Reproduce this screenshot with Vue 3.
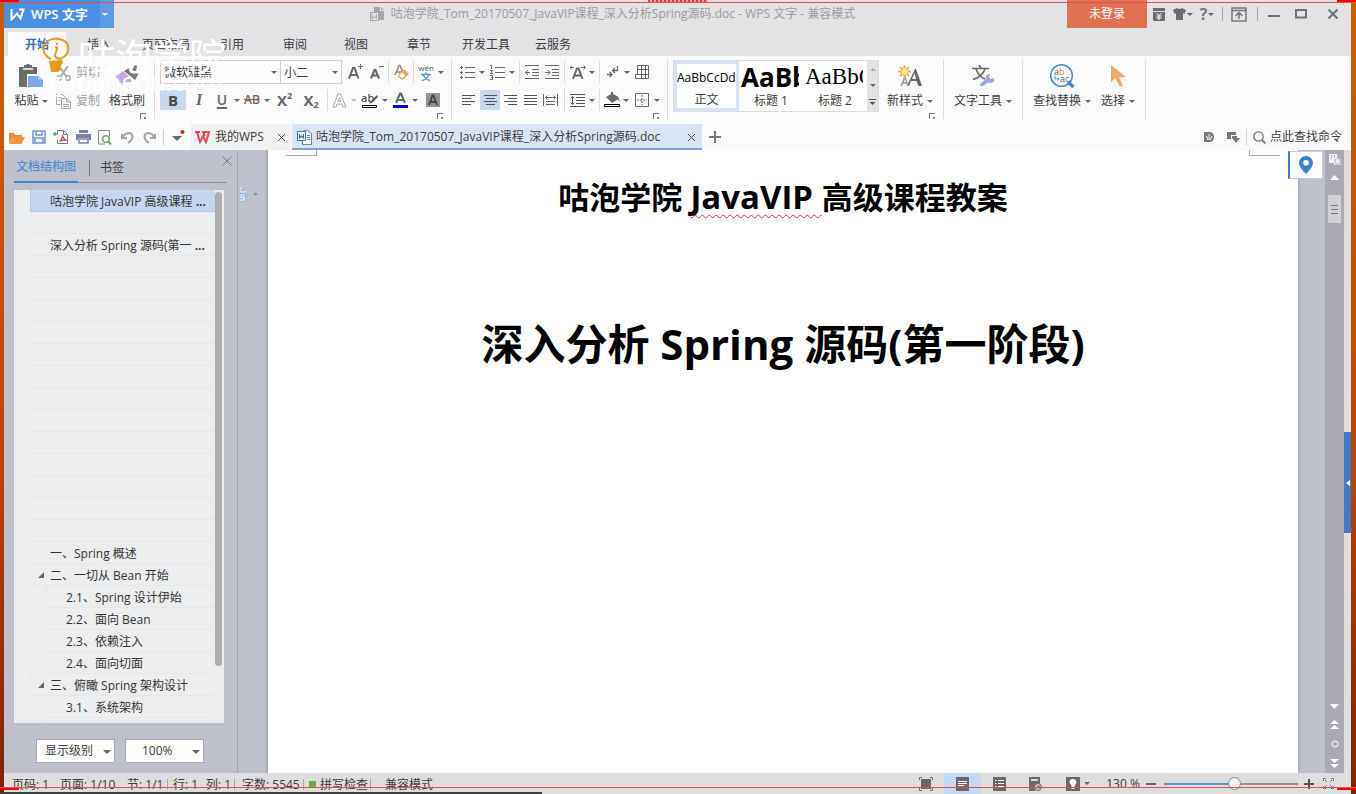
<script setup>
import { ref } from 'vue'

const menus = ['开始', '插入', '页面布局', '引用', '审阅', '视图', '章节', '开发工具', '云服务']
const docName = '咕泡学院_Tom_20170507_JavaVIP课程_深入分析Spring源码.doc'
const blanks = (n) => Array.from({ length: n }, () => ({ text: '', level: 1 }))
const outline = [
  { text: '咕泡学院 JavaVIP 高级课程', level: 1, cut: true, active: true },
  ...blanks(1),
  { text: '深入分析 Spring 源码(第一', level: 1, cut: true },
  ...blanks(13),
  { text: '一、Spring 概述', level: 1 },
  { text: '二、一切从 Bean 开始', level: 1, open: true },
  { text: '2.1、Spring 设计伊始', level: 2 },
  { text: '2.2、面向 Bean', level: 2 },
  { text: '2.3、依赖注入', level: 2 },
  { text: '2.4、面向切面', level: 2 },
  { text: '三、俯瞰 Spring 架构设计', level: 1, open: true },
  { text: '3.1、系统架构', level: 2 },
  { text: '', level: 2 }
]
const zoom = ref(53)
</script>

<template>
  <div class="desktop">
    <div class="window">
      <header class="titlebar">
        <button class="brand">
          <svg width="15" height="13" viewBox="0 0 15 13"><path d="M1.500 1v10.500L7 5.500l3.500 5L13.500 1.500H9" fill="none" stroke="#fff" stroke-width="2" /></svg>
          <span>WPS 文字</span>
          <i class="caret white"></i>
        </button>
        <div class="doc-title">
          <svg width="15" height="15" viewBox="0 0 15 15"><path d="M4 0h6v4h4v9H8V6H4z" fill="#a5a5a8" /><path d="M11 0l3 3h-3z" fill="#a5a5a8" /><rect x="0.500" y="5.500" width="8" height="8" fill="#e3e3e5" stroke="#a5a5a8" /><path d="M2 7.500v4l2.500-2 2 2v-4" fill="none" stroke="#a5a5a8" /></svg>
          <span>{{ docName }} - WPS 文字 - 兼容模式</span>
        </div>
        <button class="login">未登录</button>
        <div class="win-tools">
          <button aria-label="商城"><svg width="12" height="13" viewBox="0 0 12 13"><path d="M0 0h12v3H0zM0 4h12v8q0 1-1 1H1q-1 0-1-1z" fill="#6b6b6e" /><path d="M3.500 5L6 7.500 8.500 5M3.500 8h5M3.500 10h5M6 7.500V12" fill="none" stroke="#fff" /></svg></button>
          <button aria-label="皮肤"><svg width="13" height="12" viewBox="0 0 13 12"><path d="M4 0q2.500 2 5 0l4 2-1.500 4L10 5v7H3V5L1.500 6 0 2z" fill="#6b6b6e" /></svg><i class="caret"></i></button>
          <button class="help" aria-label="帮助">?<i class="caret"></i></button>
          <i class="tsep"></i>
          <button aria-label="隐藏功能区"><svg width="16" height="15" viewBox="0 0 16 15"><path d="M1 1h14v13H1zM1 3.500h14M8 12V6M4.500 9L8 5.500 11.500 9" fill="none" stroke="#77777a" stroke-width="1.500" /></svg></button>
          <i class="tsep"></i>
          <button aria-label="最小化"><svg width="12" height="12" viewBox="0 0 12 12"><path d="M0 8h12" stroke="#707073" stroke-width="2" /></svg></button>
          <button aria-label="最大化"><svg width="12" height="12" viewBox="0 0 12 12"><path d="M1 2h10v7.500H1z" fill="none" stroke="#707073" stroke-width="2" /></svg></button>
          <button aria-label="关闭"><svg width="12" height="12" viewBox="0 0 12 12"><path d="M1.500 1.500l9 9m0-9l-9 9" stroke="#707073" stroke-width="2" /></svg></button>
        </div>
      </header>

      <nav class="menus">
        <button v-for="(m, i) in menus" :key="m" :class="{ on: i === 0 }">{{ m }}</button>
      </nav>

      <section class="ribbon">
        <div class="group clip">
          <button class="big">
            <span class="pic"><svg width="24" height="24" viewBox="0 0 24 24"><path d="M0 3h5V1h2l1-1h2l1 1h2v2h5v7H8v13H1q-1 0-1-1z" fill="#6b6b6b" /><path d="M4 5h10" stroke="#fbfbfb" stroke-width="1.500" /><path d="M9 12h10l5 4v6q0 1-1 1H9z" fill="#7ba7e6" /><path d="M19 11v5h5z" fill="#a9c6f0" /></svg></span>
            <span class="cap">粘贴<i class="caret"></i></span>
          </button>
          <div class="duo">
            <button><svg width="15" height="15" viewBox="0 0 15 15"><path d="M3 0l7 10M12 0L5 10" stroke="#aaa" stroke-width="2" fill="none" /><circle cx="3" cy="12" r="2.200" fill="none" stroke="#aaa" stroke-width="1.500" /><circle cx="12" cy="12" r="2.200" fill="none" stroke="#aaa" stroke-width="1.500" /></svg>剪切</button>
            <button><svg width="15" height="15" viewBox="0 0 15 15"><path d="M4.500 10.500H.5V.5h6l3 3M5.500 4.500h5l4 3.500v6.500h-9zM10.500 4.500V8h4M7 10.500h6M7 12.500h6M2.500 3.500H5M2.500 6.500H4" fill="none" stroke="#aaa" /></svg>复制</button>
          </div>
          <button class="big">
            <span class="pic"><svg width="24" height="22" viewBox="0 0 24 22"><path d="M9 6l5-3 3 2 3-5 2 1-1 5 3 2-4 7z" fill="#777" /><path d="M0 12l8-6 10 9-5 4-3-1-1 4-3-4-3-1z" fill="#c9a4ee" /></svg></span>
            <span class="cap">格式刷</span>
          </button>
          <i class="launch"></i>
        </div>

        <div class="group font">
          <div class="row r1">
            <div class="combo">
              <label class="pick face"><select aria-label="字体"><option>微软雅黑</option></select><i class="caret"></i></label>
              <label class="pick size"><select aria-label="字号"><option>小二</option></select><i class="caret"></i></label>
            </div>
            <button aria-label="增大字号"><svg width="15" height="16" viewBox="0 0 15 16"><path d="M1 14.500L5 4h1.500l4 10.500M2.500 11h6.500" fill="none" stroke="#666" stroke-width="2" /><path d="M10 2.500h5M12.500 0v5" stroke="#666" /></svg></button>
            <button aria-label="减小字号"><svg width="15" height="16" viewBox="0 0 15 16"><path d="M1 14.500L4.500 6h1l3.500 8.500M2 11.500h6" fill="none" stroke="#666" stroke-width="2" /><path d="M9 2.500h5" stroke="#666" /></svg></button>
            <i class="vsep"></i>
            <button aria-label="清除格式"><svg width="15" height="16" viewBox="0 0 15 16"><path d="M1 11L5 1.500h1L9 9M2.500 8H8" fill="none" stroke="#888" stroke-width="1.500" /><path d="M5 10.500l5-4.500 4 4-5 4.500q-1 .5-2 0l-2-2q-.5-1 0-2z" fill="#fff" stroke="#eda660" stroke-width="1.500" /><path d="M8 8l2.500-2 3.500 4-2.500 2z" fill="#eda660" /></svg></button>
            <i class="vsep"></i>
            <button aria-label="拼音指南"><svg class="roomy" width="16" height="20" viewBox="0 0 16 20"><text x="8" y="9" font-size="8" text-anchor="middle" fill="#555">wén</text><path d="M3 12.500h10M8 10.500v2M5 12.500q2 5 7 6M11 12.500q-2 5-7 6" fill="none" stroke="#6391d6" stroke-width="1.300" /></svg></button>
            <i class="caret"></i>
          </div>
          <div class="row r2">
            <button class="hot bold">B</button>
            <button class="ital">I</button>
            <button class="und">U</button><i class="caret"></i>
            <button class="strike">AB</button><i class="caret"></i>
            <button class="xx">X<sup>2</sup></button>
            <button class="xx">X<sub>2</sub></button>
            <i class="vsep"></i>
            <button aria-label="文字效果"><svg width="15" height="15" viewBox="0 0 15 15"><path d="M1 14L6 1h2.500L14 14h-3l-1-3H5l-1 3zM6 8.500h3L7.500 4z" fill="#fff" stroke="#aaa" /></svg></button><i class="caret pale"></i>
            <button aria-label="突出显示"><svg class="roomy" width="18" height="18" viewBox="0 0 18 18"><text x="0" y="11" font-size="11" font-weight="600" fill="#555">ab</text><path d="M16 4l-6 6-2 3 3.500-1.500L17 6z" fill="#555" /><path d="M1.500 14.500h14v2h-14z" fill="#fff" stroke="#000" /></svg></button><i class="caret"></i>
            <button aria-label="字体颜色"><svg width="15" height="17" viewBox="0 0 15 17"><path d="M3 11L7 1.500h1L12 11M4.500 8h6" fill="none" stroke="#666" stroke-width="2" /><path d="M0 13h15v3H0z" fill="#0000d8" /></svg></button><i class="caret"></i>
            <button aria-label="字符底纹"><svg width="14" height="14" viewBox="0 0 14 14"><path d="M0 0h14v14H0z" fill="#929299" /><path d="M3 12L6.500 2.500h1L11 12M4 9h6" fill="none" stroke="#444" stroke-width="1.800" /></svg></button>
          </div>
          <i class="launch"></i>
        </div>

        <div class="group para">
          <div class="row r1">
            <button aria-label="项目符号"><svg width="15" height="15" viewBox="0 0 15 15"><path d="M5 2.500h10M5 7.500h10M5 12.500h10" stroke="#666" /><path d="M0 2.500h3M1.500 1v3M0 7.500h3M1.500 6v3M0 12.500h3M1.500 11v3" stroke="#666" /></svg></button><i class="caret"></i>
            <button aria-label="编号"><svg width="15" height="17" viewBox="0 0 15 17"><path d="M5 3.500h10M5 8.500h10M5 13.500h10" stroke="#666" /><path d="M0 1.500h1.500V5M0 6.500h2.500L.5 9.500H3M0 11.500h2.500v4H0M1 13.500h1.500" fill="none" stroke="#666" /></svg></button><i class="caret"></i>
            <i class="vsep"></i>
            <button aria-label="减少缩进"><svg width="14" height="14" viewBox="0 0 14 14"><path d="M0 .5h14M7 4.500h7M7 7.500h7M7 10.500h7M0 13.500h14M0 7.500h5M3 5L.5 7.500 3 10" fill="none" stroke="#666" /></svg></button>
            <button aria-label="增加缩进"><svg width="14" height="14" viewBox="0 0 14 14"><path d="M0 .5h14M7 4.500h7M7 7.500h7M7 10.500h7M0 13.500h14M0 7.500h5M2.500 5L5 7.500 2.500 10" fill="none" stroke="#666" /></svg></button>
            <i class="vsep"></i>
            <button aria-label="字符缩放"><svg width="16" height="15" viewBox="0 0 16 15"><path d="M3 14L7 3.500h1.500L12.500 14M5 10.500h6" fill="none" stroke="#666" stroke-width="2" /><path d="M0 2.500h4M2 .5L0 2.500l2 2M11 2.500h4.500M13.500.5l2 2-2 2" fill="none" stroke="#666" /></svg></button><i class="caret"></i>
            <i class="vsep"></i>
            <button aria-label="显示段落标记"><svg width="12" height="14" viewBox="0 0 12 14"><path d="M10.500 1v4.500H6M8 3L5.500 5.500 8 8M0 9.500h5M2.500 7L5 9.500 2.500 12" fill="none" stroke="#666" stroke-width="1.300" /></svg></button><i class="caret"></i>
            <button aria-label="插入表格"><svg width="14" height="14" viewBox="0 0 14 14"><path d="M2.500.5h11v13H.5v-4M2.500.5v9M.5 9.500h13M2.500 4.500h11M6.500 1v12M10.500 1v12" fill="none" stroke="#666" /></svg></button>
          </div>
          <div class="row r2">
            <button aria-label="左对齐"><svg width="13" height="11" viewBox="0 0 13 11"><path d="M0 .5h13M0 3.500h9M0 6.500h13M0 9.500h9" stroke="#555" /></svg></button>
            <button class="hot" aria-label="居中"><svg width="13" height="11" viewBox="0 0 13 11"><path d="M0 .5h13M2 3.500h9M0 6.500h13M2 9.500h9" stroke="#555" /></svg></button>
            <button aria-label="右对齐"><svg width="13" height="11" viewBox="0 0 13 11"><path d="M0 .5h13M4 3.500h9M0 6.500h13M4 9.500h9" stroke="#555" /></svg></button>
            <button aria-label="两端对齐"><svg width="13" height="11" viewBox="0 0 13 11"><path d="M0 .5h13M0 3.500h13M0 6.500h13M0 9.500h13" stroke="#555" /></svg></button>
            <button aria-label="分散对齐"><svg width="15" height="12" viewBox="0 0 15 12"><path d="M.5 0v12M14.500 0v12M2.500 3.500h10M4.500 1.500l-2 2 2 2M10.500 1.500l2 2-2 2M3 7.500h9M3 10.500h9" fill="none" stroke="#666" /></svg></button>
            <i class="vsep"></i>
            <button aria-label="行距"><svg width="15" height="13" viewBox="0 0 15 13"><path d="M0 .5h15M6 3.500h9M6 6.500h9M6 9.500h9M0 12.500h15M2.500 2.500v8M.5 4.500l2-2 2 2M.5 8.500l2 2 2-2" fill="none" stroke="#555" /></svg></button><i class="caret"></i>
            <i class="vsep"></i>
            <button aria-label="底纹颜色"><svg width="16" height="16" viewBox="0 0 16 16"><path d="M2 5l5-3V0h2v2l5 2.500 2 5-2.500-2L8 11z" fill="#6b6b6b" /><path d="M.5 12.500h15v2H.5z" fill="#fff" stroke="#000" /></svg></button><i class="caret"></i>
            <button aria-label="边框"><svg width="14" height="14" viewBox="0 0 14 14"><path d="M.5.5h13v13H.5z" fill="none" stroke="#666" /><path d="M7 2v10M2 7h10" stroke="#666" stroke-dasharray="2 1" /></svg></button><i class="caret"></i>
          </div>
          <i class="launch"></i>
        </div>

        <div class="group styles">
          <div class="gallery">
            <button class="style sel"><span class="sample">AaBbCcDd</span><span>正文</span></button>
            <button class="style"><span class="sample h1s">AaBb</span><span>标题 1</span></button>
            <button class="style"><span class="sample h2s">AaBbC</span><span>标题 2</span></button>
            <div class="spin">
              <i class="caret up"></i><i class="caret"></i>
              <svg width="7" height="7" viewBox="0 0 7 7"><path d="M0 .5h7" stroke="#555" /><path d="M.5 3h6l-3 3z" fill="#555" /></svg>
            </div>
          </div>
          <button class="big">
            <span class="pic"><svg width="25" height="22" viewBox="0 0 25 22"><path d="M9 21l8-17h1l6 17h-3.500l-2-5H13l-2 5z" fill="#666" /><path d="M14 14h4l-1.500-6z" fill="#fbfbfb" /><path d="M3 21l4-9 3 9M4 18h5" fill="none" stroke="#999" stroke-width="1.500" /><path d="M6.500 0v3M6.500 10v3M0 6.500h3M10 6.500h3M2 2l2 2M9 9l2 2M2 11l2-2M9 4l2-2" stroke="#f4b350" stroke-width="2" /><circle cx="6.500" cy="6.500" r="3.500" fill="#ffe9a5" stroke="#f4b350" /></svg></span>
            <span class="cap">新样式<i class="caret"></i></span>
          </button>
          <i class="launch"></i>
        </div>

        <div class="group tools">
          <button class="big">
            <span class="pic"><svg width="23" height="22" viewBox="0 0 23 22"><path d="M0 3.500h17M7 0l2 3M4 4q3 8 9 10M13 4Q10 12 1 14.500" fill="none" stroke="#666" stroke-width="1.600" /><path d="M8 19l6-5q-1-4 3-5h1l-1 3 2 2 3-1q1 5-4 5l-2-.5L11 21q-3 1-3-2z" fill="#98a8da" /></svg></span>
            <span class="cap">文字工具<i class="caret"></i></span>
          </button>
        </div>

        <div class="group find">
          <button class="big">
            <span class="pic"><svg width="25" height="24" viewBox="0 0 25 24"><circle cx="11.500" cy="11.500" r="10.800" fill="#fff" stroke="#4a86d2" stroke-width="1.500" /><path d="M18 18l5.500 5" stroke="#4a86d2" stroke-width="3.500" /><text x="4" y="11" font-size="9" fill="#555">a<tspan fill="#d08030">b</tspan></text><path d="M5 12v3h4M7.500 13.500L9 15l-1.500 1.500" fill="none" stroke="#4a86d2" /><text x="10" y="18" font-size="9" fill="#555">a<tspan fill="#4a86d2">c</tspan></text></svg></span>
            <span class="cap">查找替换<i class="caret"></i></span>
          </button>
          <button class="big">
            <span class="pic"><svg width="15" height="22" viewBox="0 0 15 22"><path d="M0 0v17l4.500-4 4.500 9 3-1.500L8 12.500l7-.5z" fill="#f0a868" /></svg></span>
            <span class="cap">选择<i class="caret"></i></span>
          </button>
        </div>
      </section>

      <section class="quick">
        <div class="acts">
          <button aria-label="打开"><svg width="16" height="13" viewBox="0 0 16 13"><path d="M0 12V2h5l1 2h7v2H4z" fill="#e58a3c" /><path d="M4 6h12l-3.500 7H0z" fill="#ee9440" /></svg></button>
          <button aria-label="保存"><svg width="14" height="14" viewBox="0 0 14 14"><path d="M1 1h12v12H1zM4 1v4h6V1M1 8h12M3 8v5M11 8v5" fill="none" stroke="#6d9ad8" stroke-width="1.500" /></svg></button>
          <button aria-label="输出为PDF"><svg width="16" height="16" viewBox="0 0 16 16"><path d="M4.500 5.500v-4h6l4 4v9h-10v-4M10.500 1.500v4h4" fill="none" stroke="#777" /><path d="M0 5h4M2 3v4" stroke="#59a559" stroke-width="1.500" /><path d="M6.500 12.500q3-2 3-6.500.5 4 4 5.500-4-1-7 1z" fill="none" stroke="#d94545" stroke-width="1.300" /></svg></button>
          <button aria-label="打印"><svg width="15" height="14" viewBox="0 0 15 14"><path d="M3 0h9v3H3zM0 4h15v6h-2V8H2v2H0z" fill="#7d7daa" /><path d="M3 9h9v4H3z" fill="#fff" stroke="#7d7daa" stroke-width="1.500" /></svg></button>
          <button aria-label="打印预览"><svg width="14" height="15" viewBox="0 0 14 15"><path d="M7 14H.5V.5h11V6" fill="none" stroke="#888" /><circle cx="8" cy="9" r="3.300" fill="none" stroke="#67a567" stroke-width="1.500" /><path d="M10 11.500l3 3" stroke="#67a567" stroke-width="2" /></svg></button>
          <button aria-label="撤销"><svg width="13" height="13" viewBox="0 0 13 13"><path d="M1 3v4h5M2 6q2-4 6-4 3.500.5 3.500 3.500Q11.500 9 7 12" fill="none" stroke="#a3a3a6" stroke-width="2" /></svg></button>
          <button aria-label="重做"><svg width="13" height="13" viewBox="0 0 13 13"><path d="M12 3v4H7M11 6Q9 2 5 2 1.500 2.500 1.500 5.500 1.500 9 6 12" fill="none" stroke="#a3a3a6" stroke-width="2" /></svg></button>
        </div>
        <i class="qsep"></i>
        <button class="more" aria-label="更多"><svg width="14" height="14" viewBox="0 0 14 14"><path d="M0 6h10l-5 5z" fill="#666" /><circle cx="10.500" cy="2" r="2" fill="#f01818" /></svg></button>
        <div class="tab">
          <svg width="16" height="13" viewBox="0 0 16 13"><path d="M0 1h5M2 1l3 10 3-6 3 6 3-10H8l2 4" fill="none" stroke="#e5484d" stroke-width="2" /></svg>
          <span>我的WPS</span>
          <button aria-label="关闭标签"><svg width="9" height="9" viewBox="0 0 9 9"><path d="M1 1l7 7m0-7L1 8" stroke="#444" /></svg></button>
        </div>
        <div class="tab current">
          <svg width="15" height="15" viewBox="0 0 15 15"><path d="M6.500.5h4l4 3v11h-9V11M10 5.500h3M10 7.500h3M10 9.500h3" fill="#fff" stroke="#6b7f9f" /><path d="M.5 1.500h8v9h-8z" fill="#fff" stroke="#4471b5" /><path d="M2.500 4v4l2-2 2 2V4" fill="none" stroke="#4471b5" stroke-width="1.300" /></svg>
          <span>{{ docName }}</span>
          <button aria-label="关闭标签"><svg width="9" height="9" viewBox="0 0 9 9"><path d="M1 1l7 7m0-7L1 8" stroke="#444" /></svg></button>
        </div>
        <button class="plus" aria-label="新建标签"><svg width="12" height="12" viewBox="0 0 12 12"><path d="M0 6h12M6 0v12" stroke="#777" stroke-width="2" /></svg></button>
        <div class="find-cmd">
          <button aria-label="文档"><svg width="10" height="10" viewBox="0 0 10 10"><path d="M0 0h5q5 0 5 5t-5 5H0z" fill="#76787f" /><path d="M2.500 4l1.500 4M5 2v6M8 4L6 8" stroke="#fff" fill="none" /></svg></button>
          <button aria-label="窗口"><svg width="13" height="11" viewBox="0 0 13 11"><path d="M0 0h9v3H4v4H0z" fill="#76787f" /><path d="M5 4h5v2h3l-4 5-4-5z" fill="#76787f" /></svg></button>
          <i class="qsep"></i>
          <button class="cmd"><svg width="13" height="13" viewBox="0 0 13 13"><circle cx="5.500" cy="5.500" r="4.700" fill="none" stroke="#777" stroke-width="1.300" /><path d="M9 9l3.500 3.500" stroke="#777" stroke-width="1.800" /></svg>点此查找命令</button>
        </div>
      </section>

      <main class="work">
        <aside class="side">
          <div class="side-tabs">
            <button class="on">文档结构图</button>
            <i></i>
            <button>书签</button>
            <button class="shut" aria-label="关闭窗格"><svg width="10" height="10" viewBox="0 0 10 10"><path d="M.5.5l9 9m0-9l-9 9" stroke="#77797f" /></svg></button>
          </div>
          <div class="tree">
            <ul>
              <li v-for="(n, i) in outline" :key="i" :class="['l' + n.level, { active: n.active }]">
                <b v-if="n.open" class="fold"></b>{{ n.text }}<strong v-if="n.cut">&nbsp;...</strong>
              </li>
            </ul>
            <div class="thumb"></div>
          </div>
          <div class="side-foot">
            <label class="pick"><select aria-label="显示级别"><option>显示级别</option></select><i class="caret large"></i></label>
            <label class="pick pct"><select aria-label="比例"><option>100%</option></select><i class="caret large"></i></label>
          </div>
        </aside>
        <div class="gutter">
          <svg width="20" height="17" viewBox="0 0 20 17"><path d="M1 1l6 5v10H1z" fill="#92b0de" /><path d="M2 1v5h5M6 9H2v2.500h3.500V14H1" stroke="#e6edf8" fill="none" stroke-width="1.300" /><path d="M14 7h5l-2.500 3z" fill="#8a8d96" /></svg>
        </div>
        <article class="page">
          <div class="crop"><i></i><i></i></div>
          <h1>咕泡学院 <span class="typo">JavaVIP </span>高级课程教案</h1>
          <h2>深入分析 Spring 源码(第一阶段)</h2>
        </article>
        <div class="gutter right">
          <button class="pin" aria-label="定位"><svg width="14" height="18" viewBox="0 0 14 18"><path d="M7 18Q0 11 0 7a7 7 0 0 1 14 0q0 4-7 11z" fill="#3f7fd0" /><circle cx="7" cy="6.800" r="2.800" fill="#fff" /></svg></button>
        </div>
        <div class="scroll">
          <svg width="12" height="11" viewBox="0 0 12 11"><path d="M0 0h8v3l4 3v5H5V9H0z" fill="#f2f2f4" /><path d="M2.500 1v4M5.500 1v3M6 9V6l2.500-2L11 6.500V10H6" stroke="#a9aab4" fill="none" /></svg>
          <svg class="tri" width="9" height="5" viewBox="0 0 9 5"><path d="M0 5l4.500-5L9 5z" fill="#fff" /></svg>
          <div class="grip"><i></i><i></i><i></i></div>
          <div class="steps">
            <svg width="9" height="5" viewBox="0 0 9 5"><path d="M0 0l4.500 5L9 0z" fill="#fff" /></svg>
            <svg width="9" height="9" viewBox="0 0 9 9"><path d="M0 4l4.500-4L9 4zM0 9l4.500-4L9 9z" fill="#fff" /></svg>
            <svg width="8" height="8" viewBox="0 0 8 8"><circle cx="4" cy="4" r="3" fill="none" stroke="#fff" /></svg>
            <svg width="9" height="9" viewBox="0 0 9 9"><path d="M0 0l4.500 4L9 0zM0 5l4.500 4L9 5z" fill="#fff" /></svg>
          </div>
        </div>
        <div class="edge"><button aria-label="展开"><svg width="4" height="6" viewBox="0 0 4 6"><path d="M0 3l4-3v6z" fill="#fff" /></svg></button></div>
      </main>

      <footer class="status">
        <div class="info">
          <span>页码: 1</span><span>页面: 1/10</span><span>节: 1/1</span><i></i><span>行: 1</span><span>列: 1</span><i></i><span>字数: 5545</span><i></i>
          <span class="spell"><b></b>拼写检查</span><i></i><span>兼容模式</span>
        </div>
        <div class="views">
          <button aria-label="全屏"><svg width="14" height="14" viewBox="0 0 14 14"><path d="M2 2h10v10H2z" fill="#69696c" /><path d="M.5 3V.5H3M11 .5h2.500V3M.5 11v2.500H3M11 13.500h2.500V11" fill="none" stroke="#69696c" /></svg></button>
          <button class="on" aria-label="页面视图"><svg width="13" height="14" viewBox="0 0 13 14"><path d="M0 0h13v14H0z" fill="#69696c" /><path d="M2 4.500h9M2 6.500h9M2 8.500h6" stroke="#fff" /></svg></button>
          <button aria-label="大纲"><svg width="13" height="14" viewBox="0 0 13 14"><path d="M0 0h13v14H0z" fill="#69696c" /><path d="M2 3.500h1.500M5 3.500h6M2 6.500h1.500M5 6.500h6M2 9.500h1.500M5 9.500h6" stroke="#fff" /></svg></button>
          <button aria-label="网页"><svg width="13" height="14" viewBox="0 0 13 14"><path d="M0 0h11v7L6 14H0z" fill="#69696c" /><path d="M2 3h7" stroke="#fff" stroke-width="1.500" /><circle cx="9" cy="10" r="3.500" fill="#ccc" stroke="#69696c" /><path d="M7 11l4-2M9 8l1 4" stroke="#69696c" /></svg></button>
          <button class="eye" aria-label="护眼"><svg width="14" height="14" viewBox="0 0 14 14"><path d="M0 0h14v14H0z" fill="#69696c" /><path d="M7 2q3.500 0 3.500 3.500L8.500 9v3h-3V9l-2-3.500Q3.500 2 7 2z" fill="#fff" /></svg><i class="caret"></i></button>
          <span>130 %</span>
          <button aria-label="缩小"><svg width="10" height="10" viewBox="0 0 10 10"><path d="M0 5h10" stroke="#666" stroke-width="2" /></svg></button>
          <input v-model="zoom" type="range" min="0" max="100" aria-label="显示比例" />
          <button aria-label="放大"><svg width="10" height="10" viewBox="0 0 10 10"><path d="M0 5h10M5 0v10" stroke="#555" stroke-width="2" /></svg></button>
          <button aria-label="适应窗口"><svg width="11" height="11" viewBox="0 0 11 11"><path d="M.5 3V.5H3M8 .5h2.500V3M.5 8v2.500H3M8 10.500h2.500V8M2 2l2 2M9 2L7 4M2 9l2-2M9 9L7 7" fill="none" stroke="#777" /></svg></button>
        </div>
      </footer>
    </div>

    <div class="mark">
      <svg width="28" height="36" viewBox="0 0 28 36"><path d="M9 22Q1 18 1.500 11.500 3 2 14 1.500q12 1 12.500 10-.5 7-7.500 10-5 1-6-3l2-7q1-2-2-1" fill="none" stroke="#e69a1e" stroke-width="2" /><path d="M14 6h2v2h-2z" fill="#e69a1e" /><path d="M7 24l13-1 1 3-2 2v4l-3 3H9l-1-6z" fill="#e69a1e" /></svg>
      <b>咕泡学院</b>
      <em>gupaoedu.com</em>
    </div>
    <div class="rec top"></div>
    <div class="rec bottom"></div>
    <div class="shelf"></div>
  </div>
</template>

<style>
html,
body {
  margin: 0;
  background: #b84400;
}
</style>

<style scoped>
* {
  box-sizing: border-box;
}
.desktop {
  position: relative;
  height: 100vh;
  padding: 0 5px 0 4px;
  overflow: hidden;
  background: linear-gradient(#ca6000, #b84400 60%, #7c2200);
  font: 12px/18px "Open Sans", "Noto Sans CJK SC", sans-serif;
  color: #3c3c3c;
}
.window {
  height: 100%;
  display: flex;
  flex-direction: column;
  background: #e3e3e5;
}
button {
  display: flex;
  align-items: center;
  justify-content: center;
  flex: none;
  margin: 0;
  padding: 0;
  border: 0;
  background: none;
  font: inherit;
  color: inherit;
  white-space: nowrap;
}
svg {
  flex: none;
  display: block;
}
.roomy {
  overflow: visible;
}
i {
  font-style: normal;
}
.caret {
  flex: none;
  width: 0;
  height: 0;
  border: 3px solid transparent;
  border-top-color: #666;
  border-bottom: 0;
}
.caret.white {
  border-top-color: #fff;
}
.caret.pale {
  border-top-color: #bbb;
}
.caret.large {
  border-width: 4px 4px 0;
}
.caret.up {
  border-top: 0;
  border-bottom: 3px solid #aaa;
}

/* title bar */
.titlebar {
  flex: none;
  height: 28px;
  display: flex;
  align-items: center;
}
.brand {
  width: 110px;
  height: 28px;
  gap: 6px;
  background: linear-gradient(90deg, #4a90e2 96px, #5b9be4 96px);
  color: #fff;
  font-size: 13px;
  font-weight: 600;
}
.brand .caret {
  margin-left: 8px;
}
.doc-title {
  flex: 1;
  display: flex;
  align-items: center;
  justify-content: center;
  gap: 6px;
  padding-left: 44px;
  color: #9c9c9f;
  white-space: nowrap;
}
.login {
  width: 80px;
  height: 28px;
  background: #e07252;
  color: #fff;
}
.win-tools {
  display: grid;
  grid-template-columns: 24px 24px 24px 7px 26px 10px 24px 30px 33px;
  align-items: center;
  justify-items: center;
  width: 204px;
  height: 28px;
}
.win-tools button {
  gap: 1px;
}
.help {
  font-size: 16px;
  font-weight: 700;
  color: #77777a;
}
.tsep {
  width: 1px;
  height: 14px;
  background: #a5a5a8;
}

/* menu tabs */
.menus {
  flex: none;
  display: grid;
  grid-template-columns: 58px 66px 68px 64px 62px 60px 66px 68px 66px;
  height: 28px;
  padding: 4px 4px 0;
}
.menus button {
  padding-top: 2px;
}
.menus .on {
  background: #fbfbfb;
  color: #3a6fb5;
  font-weight: 600;
}

/* ribbon */
.ribbon {
  flex: none;
  display: flex;
  height: 68px;
  padding: 4px 0 5px;
  background: #fbfbfb;
}
.group {
  position: relative;
  flex: none;
  display: flex;
  border-right: 1px solid #dcdcde;
}
.clip {
  width: 151px;
  padding-left: 7px;
}
.font {
  width: 297px;
}
.para {
  width: 216px;
}
.font,
.para {
  flex-direction: column;
  gap: 4px;
  padding-left: 5px;
}
.styles {
  width: 276px;
  padding-left: 5px;
}
.tools {
  width: 79px;
  padding-left: 10px;
}
.find {
  width: 123px;
  gap: 10px;
  padding-left: 10px;
}
.launch {
  position: absolute;
  right: 8px;
  bottom: 0;
  width: 6px;
  height: 6px;
  border: solid #777;
  border-width: 1px 0 0 1px;
  background: linear-gradient(#888, #888) 3px 3px / 2px 2px no-repeat;
}
.big {
  flex-direction: column;
  justify-content: flex-start;
  align-self: flex-start;
}
.pic {
  display: flex;
  align-items: center;
  height: 32px;
}
.cap {
  display: flex;
  align-items: center;
  gap: 4px;
  height: 18px;
}
.clip .big {
  min-width: 40px;
}
.clip .cap {
  gap: 3px;
}
.duo {
  display: flex;
  flex-direction: column;
  gap: 4px;
  width: 46px;
  margin: 1px 6px 0 4px;
  color: #9f9f9f;
}
.duo button {
  height: 24px;
  gap: 5px;
}
.row {
  display: grid;
  align-items: center;
  justify-items: center;
  height: 24px;
}
.font .r1 {
  grid-template-columns: 182px 26px 18px 5px 20px 5px 20px 10px;
}
.font .r2 {
  grid-template-columns: 26px 26px 20px 9px 22px 8px 27px 26px 6px 19px 9px 23px 8px 22px 8px 28px;
}
.para .r1 {
  grid-template-columns: 21px 8px 22px 8px 6px 20px 20px 5px 21px 8px 7px 19px 9px 22px;
}
.para .r2 {
  grid-template-columns: 23px 20px 21px 19px 20px 8px 19px 9px 7px 18px 10px 22px 8px;
}
.vsep {
  width: 1px;
  height: 22px;
  background: #dcdcde;
}
.combo {
  display: flex;
  width: 100%;
}
.pick {
  position: relative;
  display: block;
}
.pick select {
  appearance: none;
  display: block;
  width: 100%;
  height: 24px;
  margin: 0;
  padding: 1px 3px 0;
  border: 1px solid #cfcfd2;
  border-radius: 0;
  background: #fdfdfd;
  font: inherit;
  color: inherit;
}
.pick .caret {
  position: absolute;
  right: 4px;
  top: 11px;
}
.face {
  width: 122px;
}
.size {
  width: 62px;
  margin-left: -1px;
}
.hot {
  justify-self: stretch;
  height: 20px;
  background: #c8d8ef;
}
.bold {
  font-size: 15px;
  font-weight: 700;
  color: #4a4a4a;
}
.ital {
  font: italic 16px/20px "Liberation Serif", serif;
  font-weight: 700;
  color: #666;
}
.und {
  font-size: 14px;
  font-weight: 600;
  text-decoration: underline;
  text-decoration-thickness: 2px;
  text-underline-offset: 2px;
  color: #666;
}
.strike {
  font-weight: 600;
  color: #666;
  text-decoration: line-through #c04040;
}
.xx {
  align-items: baseline;
  font-size: 15px;
  font-weight: 700;
  color: #666;
}
.xx sup,
.xx sub {
  font-size: 9px;
  line-height: 9px;
}
.xx sup {
  align-self: flex-start;
}
.xx sub {
  align-self: flex-end;
}
.gallery {
  display: flex;
  width: 206px;
  height: 52px;
  margin-right: 8px;
  border: 1px solid #dcdcde;
  background: #fff;
}
.style {
  flex-direction: column;
  justify-content: flex-start;
  width: 64px;
  overflow: hidden;
}
.style.sel {
  width: 65px;
  border: 3px solid #d6e1f2;
}
.style span:last-child {
  line-height: 18px;
}
.sample {
  flex: none;
  display: flex;
  align-items: center;
  align-self: stretch;
  height: 31px;
  margin: 0 4px 0 2px;
  color: #000;
  overflow: hidden;
}
.sel .sample {
  height: 28px;
  margin: 0;
}
.sel span:last-child {
  line-height: 16px;
}
.h1s {
  font-size: 26px;
  font-weight: 700;
}
.h2s {
  font-family: "Liberation Serif", serif;
  font-size: 23px;
}
.spin {
  flex: 1;
  display: grid;
  grid-template-rows: 1fr 1fr 1fr;
  place-items: center;
  background: #e2e2e4;
}

/* quick access and document tabs */
.quick {
  flex: none;
  display: flex;
  align-items: center;
  height: 26px;
  background: #fbfbfb;
}
.acts {
  display: grid;
  grid-template-columns: repeat(7, 22px);
  padding-left: 2px;
}
.qsep {
  flex: none;
  width: 1px;
  height: 16px;
  margin: 0 3px;
  background: #cfcfd2;
}
.more {
  width: 24px;
}
.tab {
  flex: none;
  display: flex;
  align-items: center;
  gap: 4px;
  width: 100px;
  height: 26px;
  margin-right: 1px;
  padding: 0 5px 0 4px;
  background: #f1f1f2;
  white-space: nowrap;
}
.tab button {
  margin-left: auto;
}
.tab.current {
  width: 410px;
  padding: 2px 6px 0 5px;
  border-bottom: 2px solid #7ba2d2;
  background: #dae5f3;
}
.plus {
  margin-left: 6px;
}
.find-cmd {
  display: flex;
  align-items: center;
  margin-left: auto;
  padding-right: 9px;
}
.find-cmd button + button {
  margin-left: 13px;
}
.find-cmd .qsep {
  margin: 0 6px;
}
.cmd {
  gap: 4px;
}

/* work area */
.work {
  flex: 1;
  min-height: 0;
  display: flex;
  background: #bec1cb;
}
.side {
  flex: none;
  display: flex;
  flex-direction: column;
  width: 234px;
  padding: 0 10px;
  border-right: 1px solid #a6a8b1;
}
.side-tabs {
  flex: none;
  display: flex;
  align-items: center;
  height: 33px;
  border-bottom: 1px solid #8c8f99;
}
.side-tabs button {
  padding-top: 4px;
}
.side-tabs .on {
  height: 33px;
  padding: 4px 2px 0;
  border-bottom: 2px solid #4583cf;
  color: #4583cf;
}
.side-tabs i {
  width: 1px;
  height: 16px;
  margin: 4px 10px 0 11px;
  background: #777;
}
.side-tabs .shut {
  align-self: flex-start;
  margin: 2px -5px 0 auto;
}
.tree {
  flex: 1;
  min-height: 0;
  display: flex;
  width: 210px;
  margin-top: 7px;
  padding-left: 16px;
  background: #ecedef;
  overflow: hidden;
}
.tree ul {
  flex: 1;
  margin: 0;
  padding: 0;
  list-style: none;
}
.tree li {
  position: relative;
  height: 22px;
  padding-left: 19px;
  border: solid #e5e6e8;
  border-width: 0 0 1px 1px;
  line-height: 24px;
  color: #333;
  white-space: nowrap;
}
.tree li.l2 {
  margin-left: 16px;
}
.tree li.active {
  border-color: #b6c9ea;
  background: #c6d5f0;
}
.fold {
  position: absolute;
  left: 7px;
  top: 8px;
  border: solid transparent;
  border-width: 0 0 6px 6px;
  border-bottom-color: #666;
}
.thumb {
  width: 7px;
  height: 89%;
  margin: 2px 2px 0 0;
  border-radius: 4px;
  background: #adadaf;
}
.side-foot {
  flex: none;
  display: flex;
  gap: 10px;
  padding: 16px 0 10px 22px;
}
.side-foot .pick {
  width: 79px;
}
.side-foot select {
  padding: 0 8px;
  border-color: #a6a8b1;
}
.side-foot .pct select {
  padding-left: 16px;
}
.gutter {
  flex: none;
  width: 30px;
  padding: 36px 0 0 1px;
  box-shadow: inset -3px 0 3px -2px #999ba5;
}
.gutter.right {
  position: relative;
  width: 27px;
  padding: 0;
  box-shadow: inset 3px 0 3px -2px #a3a5af;
}
.pin {
  position: absolute;
  right: 2px;
  top: 1px;
  width: 35px;
  height: 28px;
  border: 1px solid #ccd;
  border-left: 2px solid #3f7fd0;
  background: #fff;
}
.page {
  flex: 1;
  background: #fff;
  color: #000;
  text-align: center;
}
.crop {
  display: flex;
  justify-content: space-between;
  padding: 0 18px;
}
.crop i {
  width: 31px;
  height: 6px;
  border: solid #aaa;
  border-width: 0 1px 1px 0;
}
.crop i:last-child {
  border-width: 0 0 1px 1px;
}
h1,
h2 {
  margin: 0;
  font-weight: 700;
  white-space: nowrap;
}
h1 {
  margin-top: 21px;
  font-size: 31px;
  line-height: 40px;
}
h2 {
  margin-top: 97px;
  font-size: 42px;
  line-height: 60px;
}
.typo {
  font-size: 33px;
  text-decoration: underline wavy #d03040 1px;
  text-decoration-skip-ink: none;
  text-underline-offset: 5px;
  white-space: pre;
}
.scroll {
  flex: none;
  display: flex;
  flex-direction: column;
  align-items: center;
  width: 19px;
  padding: 4px 0 5px;
  background: #a9aab4;
}
.tri {
  margin: 10px 0 15px;
}
.grip {
  display: flex;
  flex-direction: column;
  align-items: center;
  justify-content: center;
  gap: 3px;
  width: 13px;
  height: 28px;
  background: #d0d1d6;
}
.grip i {
  width: 7px;
  height: 1px;
  background: #777;
}
.steps {
  display: flex;
  flex-direction: column;
  align-items: center;
  gap: 11px;
  margin-top: auto;
}
.edge {
  flex: none;
  display: grid;
  grid-template-rows: 282fr 101px 240fr;
  width: 7px;
  background: #dfdfe1;
}
.edge button {
  grid-row: 2;
  background: #3f7bcb;
}

/* status bar */
.status {
  flex: none;
  display: flex;
  justify-content: space-between;
  height: 21px;
  background: #dededf;
}
.info {
  display: grid;
  grid-template-columns: 48px 67px 40px 6px 33px 28px 8px 61px 6px 61px 15px 60px;
  align-items: center;
  padding: 2px 0 0 8px;
  white-space: nowrap;
}
.info i {
  width: 1px;
  height: 11px;
  background: #a5a5a8;
}
.spell {
  display: flex;
  align-items: center;
  gap: 4px;
}
.spell b {
  width: 7px;
  height: 7px;
  background: #5cb043;
}
.views {
  display: grid;
  grid-template-columns: 37px 37px 37px 34px 52px 38px 18px 142px 14px 24px;
  align-items: center;
  justify-items: center;
  padding-right: 11px;
}
.views button {
  height: 21px;
}
.views .eye {
  gap: 4px;
}
.views .on {
  justify-self: stretch;
  background: #c6d8f2;
}
.views input {
  appearance: none;
  width: 134px;
  height: 14px;
  margin: 0;
  background: linear-gradient(90deg, #5b93d8 53%, #8f8f92 53%) center / 100% 2px no-repeat;
}
.views input::-webkit-slider-thumb {
  appearance: none;
  width: 13px;
  height: 13px;
  border: 1px solid #888;
  border-radius: 50%;
  background: #f2f2f2;
}

/* overlays */
.mark {
  position: absolute;
  left: 42px;
  top: 37px;
  display: grid;
  grid-template: 34px 22px / 36px auto;
  color: #fff;
  pointer-events: none;
}
.mark b {
  font-size: 37px;
  line-height: 40px;
  font-weight: 400;
}
.mark em {
  grid-column: 1 / 3;
  padding-left: 6px;
  font: 25px/20px "Open Sans", sans-serif;
}
.rec {
  position: absolute;
  left: 0;
  right: 0;
  height: 3px;
  pointer-events: none;
  background:
    linear-gradient(#f00, #f00) left / 19px 3px no-repeat,
    linear-gradient(#f00, #f00) right / 19px 3px no-repeat;
}
.rec.top {
  top: 0;
  border-bottom: 1px solid #dc5050;
}
.rec.top::after {
  content: "";
  position: absolute;
  left: 50%;
  width: 60px;
  height: 2px;
  margin-left: -30px;
  background: repeating-linear-gradient(90deg, #e84040 0 2px, #f6a0a0 2px 4px);
}
.rec.bottom {
  bottom: 4px;
  border-top: 1px solid #dc5050;
}
.shelf {
  position: absolute;
  left: 0;
  bottom: 0;
  width: 40%;
  height: 2px;
  background: #404044;
}
</style>
